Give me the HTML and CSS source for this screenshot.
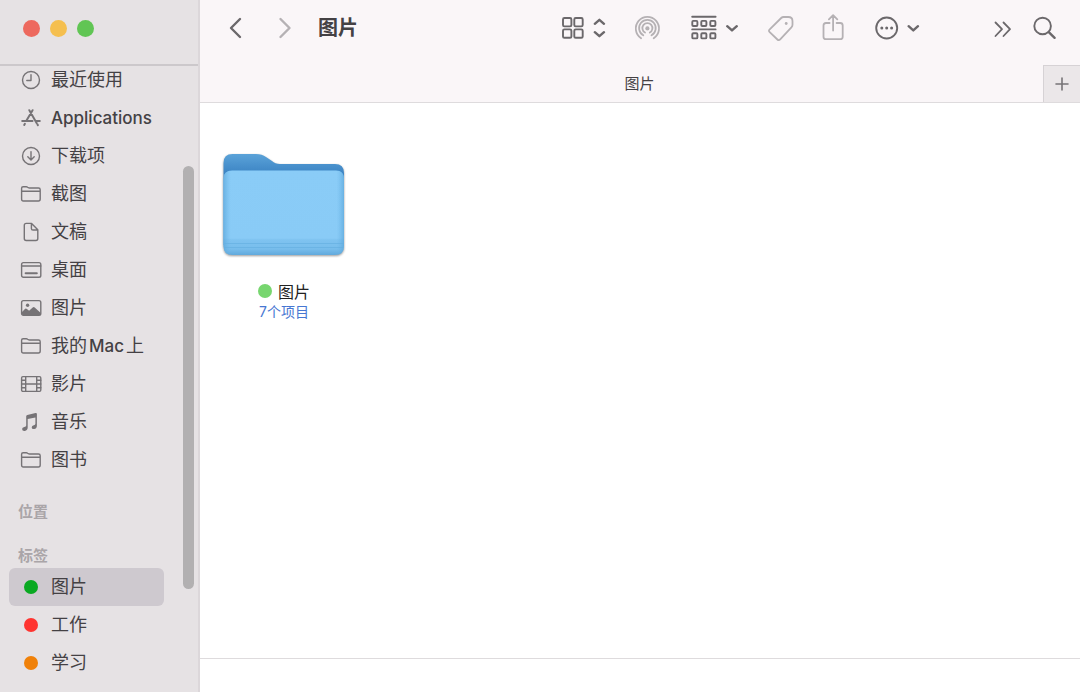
FILE: index.html
```html
<!DOCTYPE html>
<html lang="zh-CN">
<head>
<meta charset="utf-8">
<meta name="viewport" content="width=device-width, initial-scale=1">
<title>图片</title>
<link rel="stylesheet" href="styles.css">
</head>
<body>
<svg class="defs" width="0" height="0" aria-hidden="true">
  <symbol id="folder" viewBox="0 0 22 20">
    <path d="M1.6 15V4.2Q1.6 2.7 3.1 2.7H6.3Q7 2.7 7.6 3.2L8.3 3.7Q8.8 4 9.5 4H18.5Q20.2 4 20.2 5.7V15Q20.2 17 18.4 17H3.4Q1.6 17 1.6 15ZM1.6 7.2H20.2"/>
  </symbol>
</svg>
<div class="window">
  <aside class="sidebar">
    <div class="window-controls">
      <button class="light close" aria-label="关闭"></button>
      <button class="light minimize" aria-label="最小化"></button>
      <button class="light zoom" aria-label="缩放"></button>
    </div>
    <nav class="sidebar-body" aria-label="边栏">
      <ul class="places">
        <li><a class="place" href="#"><svg class="icon" viewBox="0 0 22 20"><circle cx="11" cy="10" r="8.5"/><path d="M11 4.8V10.5H6.8"/></svg>最近使用</a></li>
        <li><a class="place" href="#"><svg class="icon bold" viewBox="0 0 22 20"><path d="M9.3 2.2L16.6 15M12.6 2.2L6.2 13M2.2 13H12.5M16.3 13H19.8M4.9 15.8L4.2 17M17.4 16.3L17.9 17.2"/></svg><span class="latin">Applications</span></a></li>
        <li><a class="place" href="#"><svg class="icon" viewBox="0 0 22 20"><circle cx="11" cy="10" r="8.5"/><path d="M11 5.6V13.8M7.8 10.8L11 14L14.2 10.8"/></svg>下载项</a></li>
        <li><a class="place" href="#"><svg class="icon"><use href="#folder"/></svg>截图</a></li>
        <li><a class="place" href="#"><svg class="icon" viewBox="0 0 22 20"><path d="M6.2 1.4H11.6L17.8 7.8V16.6Q17.8 18.5 15.9 18.5H6.2Q4.3 18.5 4.3 16.6V3.3Q4.3 1.4 6.2 1.4ZM11.4 1.6V6.4Q11.4 8 13 8H17.6"/></svg>文稿</a></li>
        <li><a class="place" href="#"><svg class="icon" viewBox="0 0 22 20"><rect x="1.6" y="2.6" width="19.2" height="14.6" rx="1.8"/><path d="M1.6 6H20.8"/><path class="thick" d="M5.6 13.2H16.8"/></svg>桌面</a></li>
        <li><a class="place" href="#"><svg class="icon" viewBox="0 0 22 20"><rect x="1.6" y="2.6" width="19.2" height="14.8" rx="1.8"/><path class="solid" d="M2 14L5.2 10.8Q6 10.2 6.9 10.9L9.1 12.8L12.7 9.4Q13.7 8.6 14.7 9.4L20.5 14.8V16.2Q20.5 17.2 19 17.2H3.3Q2 17.2 2 16Z"/><circle class="solid" cx="7.6" cy="7.2" r="1.7"/></svg>图片</a></li>
        <li><a class="place" href="#"><svg class="icon"><use href="#folder"/></svg><span>我的<span class="latin mixed">Mac</span>上</span></a></li>
        <li><a class="place" href="#"><svg class="icon" viewBox="0 0 22 20"><rect x="1.6" y="2.6" width="19.2" height="14.8" rx="1.3"/><path d="M5.7 2.6V17.4M16.7 2.6V17.4M5.7 10H16.7M1.6 6.2H5.7M1.6 10H5.7M1.6 13.8H5.7M16.7 6.2H20.8M16.7 10H20.8M16.7 13.8H20.8"/></svg>影片</a></li>
        <li><a class="place" href="#"><svg class="icon" viewBox="0 0 22 20"><path class="solid" d="M6.2 4.3Q6.2 3.2 7.3 2.9L15.5 1.1Q16.9 .8 16.9 2.1V13.7Q16.9 16.7 14.1 17.1Q11.7 17.3 11.7 15.4Q11.7 13.7 13.8 13.2Q15.4 12.9 15.4 11.8V5.4L7.7 7.1V15.6Q7.7 18.5 4.7 19Q2.1 19.2 2.1 17.1Q2.1 15.4 4.3 15Q6.2 14.7 6.2 13.5Z"/></svg>音乐</a></li>
        <li><a class="place" href="#"><svg class="icon"><use href="#folder"/></svg>图书</a></li>
      </ul>
      <h2 class="section">位置</h2>
      <h2 class="section">标签</h2>
      <ul class="tags">
        <li><a class="tag selected" href="#" aria-current="page"><span class="dot green"></span>图片</a></li>
        <li><a class="tag" href="#"><span class="dot red"></span>工作</a></li>
        <li><a class="tag" href="#"><span class="dot orange"></span>学习</a></li>
      </ul>
      <div class="scroll-thumb"></div>
    </nav>
  </aside>
  <main class="content">
    <header class="toolbar">
      <button class="tool" aria-label="后退"><svg width="14" height="24" viewBox="0 0 14 24"><path class="heavy" d="M11 3L2 12L11 21"/></svg></button>
      <button class="tool forward" aria-label="前进" disabled><svg width="14" height="24" viewBox="0 0 14 24"><path class="heavy" d="M2.5 3L11.5 12L2.5 21"/></svg></button>
      <h1 class="title">图片</h1>
      <div class="tools">
        <button class="tool" aria-label="显示方式"><svg width="44" height="26" viewBox="0 0 44 26"><rect x="1" y="3" width="8.4" height="8.4" rx="1.4"/><rect x="12.3" y="3" width="8.4" height="8.4" rx="1.4"/><rect x="1" y="14.4" width="8.4" height="8.4" rx="1.4"/><rect x="12.3" y="14.4" width="8.4" height="8.4" rx="1.4"/><path class="heavy" d="M32.8 8.8L37.4 4.8L42 8.8M32.8 17.2L37.4 21.2L42 17.2"/></svg></button>
        <button class="tool" aria-label="隔空投送" disabled><svg width="27" height="27" viewBox="0 0 27 27"><path d="M7.1 23.2A11.6 11.6 0 1 1 19.7 23.2M9.3 20.3A8.3 8.3 0 1 1 17.5 20.3M11 17.5A5 5 0 1 1 15.8 17.5"/><circle class="solid" cx="13.4" cy="13.4" r="2.1"/></svg></button>
        <button class="tool" aria-label="群组"><svg width="50" height="26" viewBox="0 0 50 26"><path d="M3.2 1.8H26.6M3.2 14.4H26.6"/><rect x="3.3" y="5.9" width="5.1" height="5.1" rx="1"/><rect x="12.3" y="5.9" width="5.1" height="5.1" rx="1"/><rect x="21.3" y="5.9" width="5.1" height="5.1" rx="1"/><rect x="3.3" y="18.3" width="5.1" height="5.1" rx="1"/><rect x="12.3" y="18.3" width="5.1" height="5.1" rx="1"/><rect x="21.3" y="18.3" width="5.1" height="5.1" rx="1"/><path class="heavy" d="M38.2 11.2L43 15.4L47.8 11.2"/></svg></button>
        <button class="tool" aria-label="标签" disabled><svg width="27" height="27" viewBox="0 0 27 27"><path d="M2.7 14.4L14.2 3Q15.2 2 16.6 2H21.3Q25.5 2 25.5 6.2V9.8Q25.5 11.3 24.4 12.4L13.2 24.4Q11.8 25.9 10.4 24.5L2.7 17.1Q1.2 15.7 2.7 14.4Z"/><circle class="solid" cx="19.2" cy="8.5" r="1.4"/></svg></button>
        <button class="tool" aria-label="共享" disabled><svg width="23" height="28" viewBox="0 0 23 28"><path d="M7.6 9H4Q1.5 9 1.5 11.5V22.7Q1.5 25.2 4 25.2H18.2Q20.7 25.2 20.7 22.7V11.5Q20.7 9 18.2 9H14.6M11.1 16.5V1.5M6.9 5.3L11.1 1.2L15.3 5.3"/></svg></button>
        <button class="tool" aria-label="更多操作"><svg width="48" height="26" viewBox="0 0 48 26"><circle cx="13.7" cy="13" r="10.5"/><circle class="solid" cx="8.8" cy="13" r="1.5"/><circle class="solid" cx="13.7" cy="13" r="1.5"/><circle class="solid" cx="18.6" cy="13" r="1.5"/><path class="heavy" d="M35.6 11.2L40.3 15.4L45 11.2"/></svg></button>
      </div>
      <button class="tool more" aria-label="更多工具"><svg width="20" height="20" viewBox="0 0 20 20"><path d="M2.5 4.5L9 11.2L2.5 18M10.5 4.5L17 11.2L10.5 18"/></svg></button>
      <button class="tool" aria-label="搜索"><svg width="24" height="26" viewBox="0 0 24 26"><circle cx="9.6" cy="11" r="8.3"/><path class="heavy" d="M15.8 17.2L21.6 22.8"/></svg></button>
    </header>
    <div class="tabbar">
      <button class="tab">图片</button>
      <button class="new-tab" aria-label="新建标签页"><svg width="16" height="16" viewBox="0 0 16 16"><path d="M8 2V14M2 8H14"/></svg></button>
    </div>
    <section class="files" aria-label="文件">
      <a class="file" href="#">
        <svg class="folder-art" width="130" height="112" viewBox="0 0 130 112" aria-hidden="true">
          <defs>
            <linearGradient id="back" x1="0" y1="0" x2="0" y2="1"><stop offset="0" stop-color="#5ba3d9"/><stop offset=".2" stop-color="#3e86c5"/><stop offset="1" stop-color="#4a94cf"/></linearGradient>
            <linearGradient id="front" x1="0" y1="0" x2="0" y2="1"><stop offset="0" stop-color="#8accf7"/><stop offset=".8" stop-color="#89cbf6"/><stop offset=".82" stop-color="#7fc3f0"/><stop offset=".93" stop-color="#77bdec"/><stop offset="1" stop-color="#61a9dc"/></linearGradient>
            <linearGradient id="edge"><stop offset="0" stop-color="#5aa6da" stop-opacity=".7"/><stop offset=".06" stop-color="#6bb5e7" stop-opacity="0"/><stop offset=".94" stop-color="#6bb5e7" stop-opacity="0"/><stop offset="1" stop-color="#5aa6da" stop-opacity=".7"/></linearGradient>
          </defs>
          <path fill="url(#back)" d="M4.5 13Q4.5 4 13.5 4H37Q43 4 47 7L53 11Q56 14 61 14H116Q125 14 125 23V95H4.5Z"/>
          <path fill="url(#front)" d="M4.5 29Q4.5 20.5 13 20.5H117Q125 20.5 125 29V96Q125 105 116 105H13.5Q4.5 105 4.5 96Z"/>
          <path fill="url(#edge)" d="M4.5 29Q4.5 20.5 13 20.5H117Q125 20.5 125 29V96Q125 105 116 105H13.5Q4.5 105 4.5 96Z"/>
          <path class="ridge" d="M6 93.5H124M6 97.5H124"/>
        </svg>
        <span class="file-name"><span class="dot light-green"></span>图片</span>
        <span class="file-info">7个项目</span>
      </a>
    </section>
    <footer class="status"></footer>
  </main>
</div>
</body>
</html>
```
FILE: styles.css
```css
* { box-sizing: border-box; }

body {
  margin: 0;
  font-family: Inter, "Noto Sans CJK SC", sans-serif;
  color: #444144;
  background: #fff;
}

h1, h2, ul { margin: 0; padding: 0; list-style: none; }
a { color: inherit; text-decoration: none; }
button { margin: 0; padding: 0; border: 0; background: none; font: inherit; color: inherit; }
svg { display: block; fill: none; stroke: currentColor; stroke-linecap: round; stroke-linejoin: round; }
.defs { position: absolute; }

.window { display: flex; min-height: 100vh; }

.sidebar {
  display: flex;
  flex-direction: column;
  flex: 0 0 200px;
  background: #e6e2e4;
  border-right: 2px solid #dcd7da;
}

.window-controls {
  display: flex;
  align-items: center;
  gap: 10px;
  height: 66px;
  padding: 0 23px 8px;
  border-bottom: 2px solid #ccc8cb;
}
.light { width: 17px; height: 17px; border-radius: 50%; }
.close { background: #ed695e; }
.minimize { background: #f5bf4f; }
.zoom { background: #61c554; }

.sidebar-body { position: relative; flex: 1; font-size: 18px; line-height: 26px; }
.places { display: flex; flex-direction: column; gap: 8px; padding: 0 20px; margin: -1px 0 27px; }
.place { display: flex; align-items: center; gap: 9px; height: 30px; white-space: nowrap; }
.latin { font-size: 17px; font-weight: 500; }
.mixed { margin: 0 2px; }
.icon { flex: none; width: 22px; height: 20px; color: #767376; stroke-width: 1.4; }
.bold { stroke-width: 2; }
.thick { stroke-width: 2; }
.solid { fill: currentColor; stroke: none; }

.section { height: 20px; margin-bottom: 24px; padding-left: 18px; font-size: 15px; line-height: 20px; font-weight: 700; color: #aaa5a8; }
.section + .section { margin-bottom: 2px; }

.tags { padding: 0 34px 10px 9px; }
.tag { display: flex; align-items: center; gap: 13px; height: 38px; padding-left: 15px; border-radius: 6px; }
.selected { background: #cec9cf; }
.dot { flex: none; width: 14px; height: 14px; border-radius: 50%; }
.green { background: #0aa922; }
.red { background: #ff3430; }
.orange { background: #f08109; }
.light-green { background: #77d66f; }

.scroll-thumb { position: absolute; top: 100px; right: 4px; width: 11px; height: 423px; border-radius: 6px; background: #b2b0b1; }

.content { display: flex; flex-direction: column; flex: 1; min-width: 0; }

.toolbar { display: flex; align-items: center; height: 65px; padding: 0 23px 9px 29px; background: #faf6f8; }
.tool { display: flex; flex: none; color: #6b686b; stroke-width: 1.9; }
.tool:disabled { color: #b5b1b4; stroke-width: 1.8; }
.heavy { stroke-width: 2.4; }
.forward { margin-left: 35px; }
.title { flex: 1; margin-left: 26px; font-size: 20px; line-height: 28px; font-weight: 700; }
.tools { display: flex; align-items: center; gap: 28px; }
.more { margin: 0 20px 0 72px; stroke-width: 1.8; }

.tabbar { display: flex; height: 38px; background: #faf6f8; border-bottom: 1px solid #dedbdd; }
.tab { flex: 1; padding: 0 0 2px 36px; font-size: 15px; }
.new-tab { display: flex; align-items: center; justify-content: center; flex: 0 0 37px; color: #777477; stroke-width: 1.6; background: #ebe7e9; border: 1px solid #d6d2d5; border-width: 1px 0 0 1px; }

.files { flex: 1; padding: 47px 19px; }
.file { display: inline-flex; flex-direction: column; align-items: center; }
.folder-art { stroke: none; filter: drop-shadow(0 1px 1px #0006); }
.ridge { stroke: #62ade0; stroke-width: 1; opacity: .6; }
.file-name { display: flex; align-items: center; gap: 6px; height: 24px; margin-top: 17px; font-size: 16px; color: #222; }
.file-info { font-size: 14px; line-height: 18px; color: #4777d2; }

.status { height: 34px; border-top: 1px solid #dedbdd; }
```
